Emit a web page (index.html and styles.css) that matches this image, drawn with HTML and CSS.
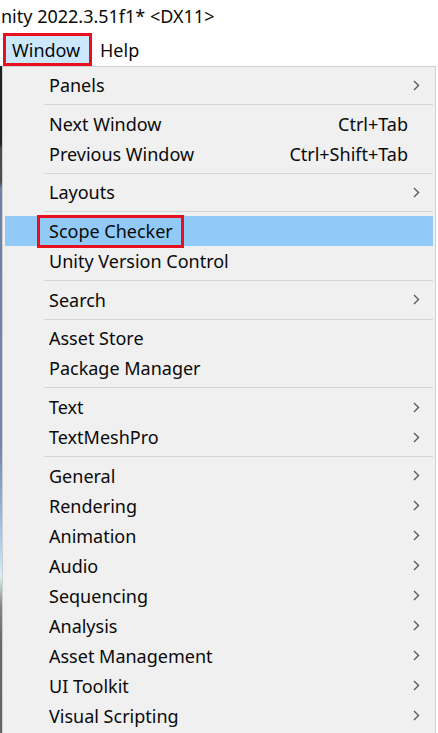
FILE: index.html
```html
<!DOCTYPE html>
<html>
<head>
<meta charset="utf-8">
<link rel="stylesheet" href="styles.css">
</head>
<body>
<div class="titlebar"><span class="title">nity 2022.3.51f1* &lt;DX11&gt;</span></div>
<div class="menubar">
  <span class="mb-item mb-active">Window</span>
  <span class="mb-item">Help</span>
</div>
<div class="main">
  <div class="strip"></div>
  <div class="menu">
    <div class="row"><span class="label">Panels</span><span class="arrow"><svg width="7" height="11" viewBox="0 0 7 11"><path d="M1 1l4.5 4.5L1 10" fill="none" stroke="#5a5a5a" stroke-width="1.4"/></svg></span></div>
    <div class="sep"></div>
    <div class="row"><span class="label">Next Window</span><span class="short">Ctrl+Tab</span><span class="arrow"></span></div>
    <div class="row"><span class="label">Previous Window</span><span class="short">Ctrl+Shift+Tab</span><span class="arrow"></span></div>
    <div class="sep"></div>
    <div class="row"><span class="label">Layouts</span><span class="arrow"><svg width="7" height="11" viewBox="0 0 7 11"><path d="M1 1l4.5 4.5L1 10" fill="none" stroke="#5a5a5a" stroke-width="1.4"/></svg></span></div>
    <div class="sep"></div>
    <div class="row row-hl"><span class="label"><span class="mark">Scope Checker</span></span><span class="arrow"></span></div>
    <div class="row"><span class="label">Unity Version Control</span><span class="arrow"></span></div>
    <div class="sep"></div>
    <div class="row"><span class="label">Search</span><span class="arrow"><svg width="7" height="11" viewBox="0 0 7 11"><path d="M1 1l4.5 4.5L1 10" fill="none" stroke="#5a5a5a" stroke-width="1.4"/></svg></span></div>
    <div class="sep"></div>
    <div class="row"><span class="label">Asset Store</span><span class="arrow"></span></div>
    <div class="row"><span class="label">Package Manager</span><span class="arrow"></span></div>
    <div class="sep"></div>
    <div class="row"><span class="label">Text</span><span class="arrow"><svg width="7" height="11" viewBox="0 0 7 11"><path d="M1 1l4.5 4.5L1 10" fill="none" stroke="#5a5a5a" stroke-width="1.4"/></svg></span></div>
    <div class="row"><span class="label">TextMeshPro</span><span class="arrow"><svg width="7" height="11" viewBox="0 0 7 11"><path d="M1 1l4.5 4.5L1 10" fill="none" stroke="#5a5a5a" stroke-width="1.4"/></svg></span></div>
    <div class="sep"></div>
    <div class="row"><span class="label">General</span><span class="arrow"><svg width="7" height="11" viewBox="0 0 7 11"><path d="M1 1l4.5 4.5L1 10" fill="none" stroke="#5a5a5a" stroke-width="1.4"/></svg></span></div>
    <div class="row"><span class="label">Rendering</span><span class="arrow"><svg width="7" height="11" viewBox="0 0 7 11"><path d="M1 1l4.5 4.5L1 10" fill="none" stroke="#5a5a5a" stroke-width="1.4"/></svg></span></div>
    <div class="row"><span class="label">Animation</span><span class="arrow"><svg width="7" height="11" viewBox="0 0 7 11"><path d="M1 1l4.5 4.5L1 10" fill="none" stroke="#5a5a5a" stroke-width="1.4"/></svg></span></div>
    <div class="row"><span class="label">Audio</span><span class="arrow"><svg width="7" height="11" viewBox="0 0 7 11"><path d="M1 1l4.5 4.5L1 10" fill="none" stroke="#5a5a5a" stroke-width="1.4"/></svg></span></div>
    <div class="row"><span class="label">Sequencing</span><span class="arrow"><svg width="7" height="11" viewBox="0 0 7 11"><path d="M1 1l4.5 4.5L1 10" fill="none" stroke="#5a5a5a" stroke-width="1.4"/></svg></span></div>
    <div class="row"><span class="label">Analysis</span><span class="arrow"><svg width="7" height="11" viewBox="0 0 7 11"><path d="M1 1l4.5 4.5L1 10" fill="none" stroke="#5a5a5a" stroke-width="1.4"/></svg></span></div>
    <div class="row"><span class="label">Asset Management</span><span class="arrow"><svg width="7" height="11" viewBox="0 0 7 11"><path d="M1 1l4.5 4.5L1 10" fill="none" stroke="#5a5a5a" stroke-width="1.4"/></svg></span></div>
    <div class="row"><span class="label">UI Toolkit</span><span class="arrow"><svg width="7" height="11" viewBox="0 0 7 11"><path d="M1 1l4.5 4.5L1 10" fill="none" stroke="#5a5a5a" stroke-width="1.4"/></svg></span></div>
    <div class="row"><span class="label">Visual Scripting</span><span class="arrow"><svg width="7" height="11" viewBox="0 0 7 11"><path d="M1 1l4.5 4.5L1 10" fill="none" stroke="#5a5a5a" stroke-width="1.4"/></svg></span></div>
  </div>
</div>
</body>
</html>
```
FILE: styles.css
```css
html, body {
  margin: 0;
  padding: 0;
  background: #ffffff;
  overflow: hidden;
}
body {
  width: 438px;
  height: 733px;
  font-family: "Noto Sans", "Open Sans", "DejaVu Sans", sans-serif;
  font-size: 18px;
  color: #0a0a0a;
}
.titlebar {
  height: 33px;
  display: flex;
  align-items: center;
  padding-left: 1px;
}
.title {
  line-height: 33px;
}
.menubar {
  height: 33px;
  display: flex;
  align-items: stretch;
  padding-left: 3px;
}
.mb-item {
  display: flex;
  align-items: center;
  padding: 0 8px 0 8px;
}
.mb-active {
  border: 3px solid #e8101e;
  background: #cce8ff;
  padding: 0 7px 0 6px;
  width: 70px;
}
.main {
  display: flex;
  height: 667px;
}
.strip {
  width: 2px;
  flex: none;
  background: linear-gradient(to bottom,
    #1f1f1f 0px, #222 78px, #4a4a4a 82px, #4e4e4e 116px,
    #6b82a6 122px, #6f87ab 380px, #9ab6dc 450px, #bcd8f2 490px,
    #d6f2f4 510px, #8a8480 540px, #6e6660 580px, #6a625c 667px);
}
.menu {
  flex: none;
  width: 434px;
  background: #f0f0f0;
  border: 1px solid #cfcfcf;
  border-bottom: none;
  padding-top: 3px;
  box-sizing: border-box;
}
.row {
  height: 30px;
  display: flex;
  align-items: center;
  margin: 0 2px;
  padding-left: 44px;
}
.label {
  flex: 1;
  white-space: nowrap;
}
.short {
  white-space: nowrap;
}
.arrow {
  width: 25px;
  flex: none;
  display: flex;
  align-items: center;
  padding-left: 5px;
  box-sizing: border-box;
  height: 30px;
}
.row-hl {
  background: #91c9f7;
}
.mark {
  display: inline-block;
  border: 3px solid #e8101e;
  margin-left: -12px;
  padding: 0 8px 0 9px;
  line-height: 27px;
  margin-top: -2px;
  margin-bottom: -2px;
}
.sep {
  height: 1px;
  background: #d6d6d6;
  margin: 4px 2px 3.7px 41px;
}
```
